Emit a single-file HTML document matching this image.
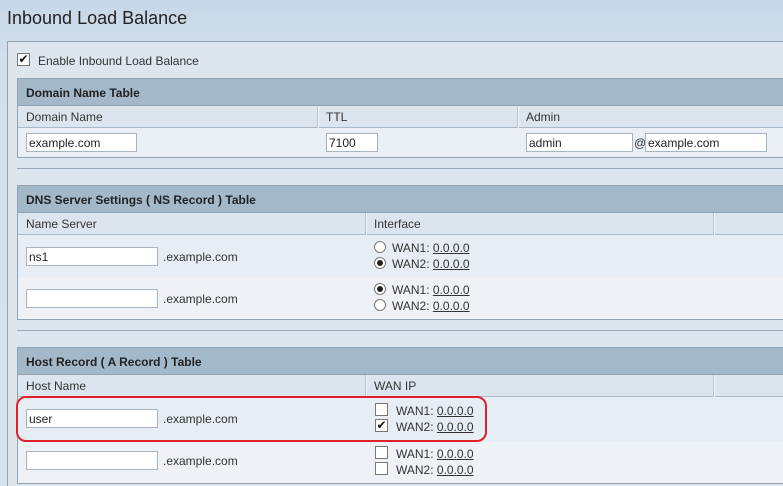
<!DOCTYPE html>
<html style="width:783px;height:486px;overflow:hidden"><head><style>
*{margin:0;padding:0;box-sizing:border-box}
body{width:783px;height:486px;overflow:hidden;background:linear-gradient(#c6d7e7,#d3e0ec 60px,#d6e2ed);font-family:"Liberation Sans",Arial,sans-serif;font-size:12px;color:#333;position:relative}
.a{position:absolute}
.title{left:7px;top:8px;font-size:18px;color:#222}
.panel{left:7px;top:41px;width:790px;height:460px;border:1px solid #8fa3b5;background:#dde6ef}
.tbl{left:17px;width:780px;border:1px solid #8fa3b5;background:#e6edf4;overflow:hidden}
.hd{position:absolute;left:0;right:0;top:0;height:27px;background:#a3b9ca;border-bottom:1px solid #8fa3b5;font-weight:bold;font-size:12px;padding:7px 0 0 8px;color:#222}
.ch{position:absolute;left:0;right:0;top:27px;height:22px;background:#dce5ee;border-bottom:1px solid #a9b9c8;padding:4px 0 0 8px;color:#333}
.sep{position:absolute;top:27px;height:22px;border-left:1px solid #f4f7fa;box-shadow:-1px 0 0 #b6c5d3}
.row{position:absolute;left:0;right:0}
input{position:absolute;height:19px;border:1px solid #a8b4bf;background:#fff;font:12px "Liberation Sans",Arial,sans-serif;padding:0 2px;color:#222}
.t{position:absolute;font-size:12px;color:#333}
.line{left:17px;width:770px;height:1px;background:#9aaabb}
.rd{position:absolute;width:12px;height:12px;border-radius:50%;border:1px solid #777;background:#fff}
.rd.on::after{content:"";position:absolute;left:2px;top:2px;width:6px;height:6px;border-radius:50%;background:#222}
.cb{position:absolute;width:13px;height:13px;border:1px solid #777;background:#fff;font-size:12px;line-height:11px;text-align:center;color:#111}
u{color:#333}
</style></head><body>
<div class="a title">Inbound Load Balance</div>
<div class="a panel"></div>
<div class="cb" style="left:17px;top:53px">✔</div>
<div class="t" style="left:38px;top:54px">Enable Inbound Load Balance</div>

<div class="a tbl" style="top:78px;height:80px">
<div class="hd">Domain Name Table</div>
<div class="ch">Domain Name<span style="position:absolute;left:308px;top:4px">TTL</span><span style="position:absolute;left:508px;top:4px">Admin</span></div>
<div class="sep" style="left:300px"></div><div class="sep" style="left:500px"></div>
<div class="row" style="top:49px;height:29px;background:#e9eff5"></div>
<input style="left:8px;top:54px;width:111px" value="example.com">
<input style="left:308px;top:54px;width:52px" value="7100">
<input style="left:508px;top:54px;width:107px" value="admin">
<span class="t" style="left:616px;top:57px">@</span>
<input style="left:627px;top:54px;width:122px" value="example.com">
</div>
<div class="a line" style="top:168px"></div>

<div class="a tbl" style="top:185px;height:135px">
<div class="hd">DNS Server Settings ( NS Record ) Table</div>
<div class="ch">Name Server<span style="position:absolute;left:356px;top:4px">Interface</span></div>
<div class="sep" style="left:348px"></div><div class="sep" style="left:696px"></div>
<div class="row" style="top:49px;height:42px;background:#e6edf4"></div>
<div class="row" style="top:91px;height:42px;background:#eef2f7"></div>
<input style="left:8px;top:61px;width:132px" value="ns1"><span class="t" style="left:145px;top:64px">.example.com</span>
<div class="rd" style="left:356px;top:55px"></div><span class="t" style="left:374px;top:55px">WAN1: <u>0.0.0.0</u></span>
<div class="rd on" style="left:356px;top:71px"></div><span class="t" style="left:374px;top:71px">WAN2: <u>0.0.0.0</u></span>
<input style="left:8px;top:103px;width:132px" value=""><span class="t" style="left:145px;top:106px">.example.com</span>
<div class="rd on" style="left:356px;top:97px"></div><span class="t" style="left:374px;top:97px">WAN1: <u>0.0.0.0</u></span>
<div class="rd" style="left:356px;top:113px"></div><span class="t" style="left:374px;top:113px">WAN2: <u>0.0.0.0</u></span>
</div>
<div class="a line" style="top:330px"></div>

<div class="a tbl" style="top:347px;height:137px">
<div class="hd">Host Record ( A Record ) Table</div>
<div class="ch">Host Name<span style="position:absolute;left:356px;top:4px">WAN IP</span></div>
<div class="sep" style="left:348px"></div><div class="sep" style="left:696px"></div>
<div class="row" style="top:49px;height:44px;background:#e6edf4"></div>
<div class="row" style="top:93px;height:60px;background:#eef2f7"></div>
<input style="left:8px;top:61px;width:132px" value="user"><span class="t" style="left:145px;top:64px">.example.com</span>
<div class="cb" style="left:357px;top:55px"></div><span class="t" style="left:378px;top:56px">WAN1: <u>0.0.0.0</u></span>
<div class="cb" style="left:357px;top:71px">✔</div><span class="t" style="left:378px;top:72px">WAN2: <u>0.0.0.0</u></span>
<input style="left:8px;top:103px;width:132px" value=""><span class="t" style="left:145px;top:106px">.example.com</span>
<div class="cb" style="left:357px;top:98px"></div><span class="t" style="left:378px;top:99px">WAN1: <u>0.0.0.0</u></span>
<div class="cb" style="left:357px;top:114px"></div><span class="t" style="left:378px;top:115px">WAN2: <u>0.0.0.0</u></span>
</div>
<div class="a" style="left:16px;top:396px;width:471px;height:46px;border:2px solid #e0202a;border-radius:10px"></div>
</body></html>
